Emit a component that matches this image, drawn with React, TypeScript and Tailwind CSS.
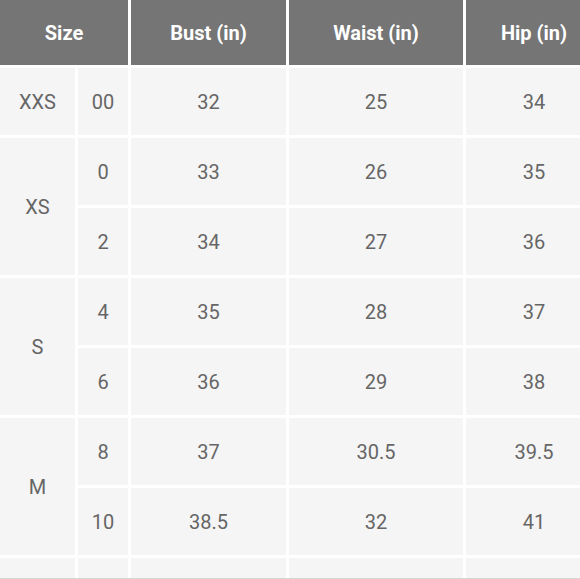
import React from "react";

const cell = "bg-[#f5f5f5] flex items-center justify-center text-[20px] text-[#666666]";
const head = "bg-[#757575] flex items-center justify-center text-[20px] font-bold text-white";

const rows: [string, string, string, string][] = [
  ["00", "32", "25", "34"],
  ["0", "33", "26", "35"],
  ["2", "34", "27", "36"],
  ["4", "35", "28", "37"],
  ["6", "36", "29", "38"],
  ["8", "37", "30.5", "39.5"],
  ["10", "38.5", "32", "41"],
  ["", "", "", ""],
];

const groups: { label: string; span: number; start: number }[] = [
  { label: "XXS", span: 1, start: 2 },
  { label: "XS", span: 2, start: 3 },
  { label: "S", span: 2, start: 5 },
  { label: "M", span: 2, start: 7 },
  { label: "", span: 2, start: 9 },
];

const rowStart: Record<number, string> = {
  2: "row-start-2",
  3: "row-start-3",
  4: "row-start-4",
  5: "row-start-5",
  6: "row-start-6",
  7: "row-start-7",
  8: "row-start-8",
  9: "row-start-9",
  10: "row-start-10",
};

export default function App() {
  return (
    <div
      className="w-[580px] h-[579px] bg-white overflow-hidden flex flex-col"
      style={{ fontFamily: "Roboto, 'Noto Sans', sans-serif" }}
    >
      <div className="h-[578px] overflow-hidden">
        <div className="grid grid-cols-[75px_50px_155px_174px_136px] grid-rows-[65px_repeat(9,67px)] gap-[3px] w-[602px]">
          <div className={`${head} col-span-2 row-start-1 col-start-1`}>Size</div>
          <div className={`${head} row-start-1 col-start-3`}>Bust (in)</div>
          <div className={`${head} row-start-1 col-start-4`}>Waist (in)</div>
          <div className={`${head} row-start-1 col-start-5`}>Hip (in)</div>
          {groups.map((g, i) => (
            <div
              key={i}
              className={`${cell} col-start-1 ${rowStart[g.start]} ${g.span === 2 ? "row-span-2" : "row-span-1"}`}
            >
              {g.label}
            </div>
          ))}
          {rows.map((r, i) => (
            <React.Fragment key={i}>
              <div className={`${cell} col-start-2 ${rowStart[i + 2]}`}>{r[0]}</div>
              <div className={`${cell} col-start-3 ${rowStart[i + 2]}`}>{r[1]}</div>
              <div className={`${cell} col-start-4 ${rowStart[i + 2]}`}>{r[2]}</div>
              <div className={`${cell} col-start-5 ${rowStart[i + 2]}`}>{r[3]}</div>
            </React.Fragment>
          ))}
        </div>
      </div>
      <div className="h-px bg-[#d6d6d6]" />
    </div>
  );
}
